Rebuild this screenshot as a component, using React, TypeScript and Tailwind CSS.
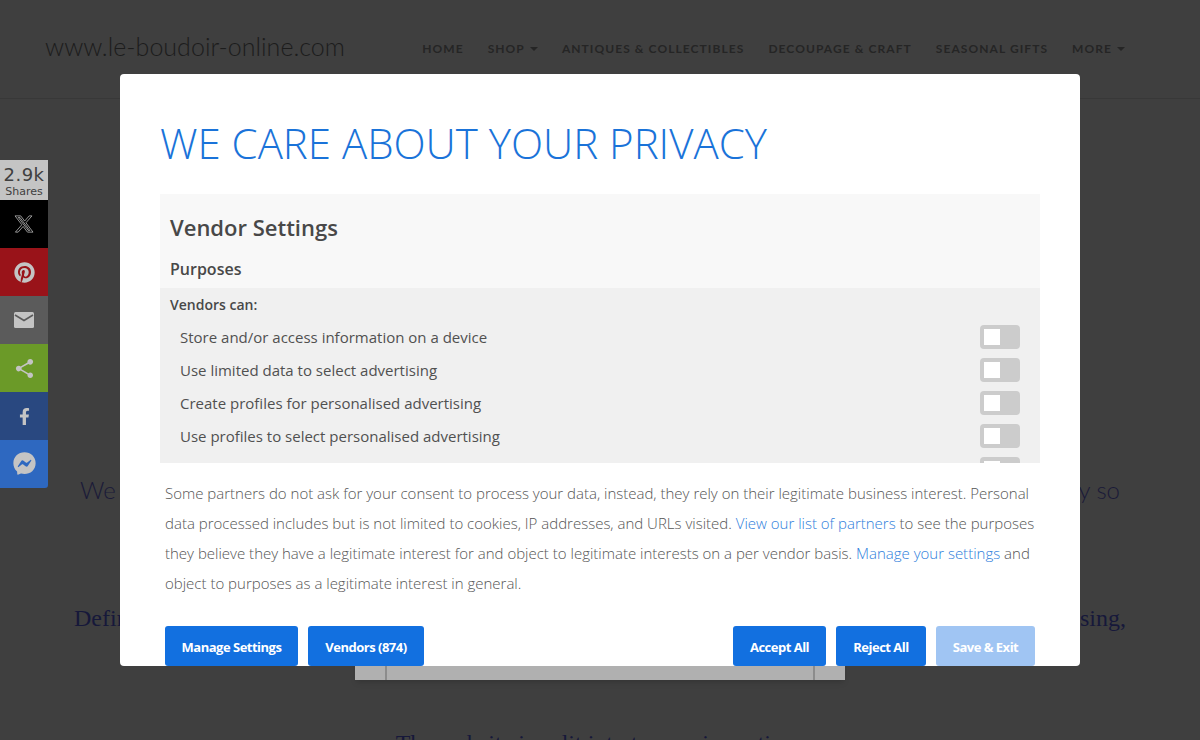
import { FaFacebookMessenger, FaFacebookF, FaPinterest } from 'react-icons/fa';
import { MdShare } from 'react-icons/md';

const NAV = ['HOME', 'SHOP', 'ANTIQUES & COLLECTIBLES', 'DECOUPAGE & CRAFT', 'SEASONAL GIFTS', 'MORE'];
const PURPOSES = [
  'Store and/or access information on a device',
  'Use limited data to select advertising',
  'Create profiles for personalised advertising',
  'Use profiles to select personalised advertising',
  '',
];

function Toggle() {
  return (
    <div className="ml-auto w-10 h-6 p-1 rounded-[4px] bg-[#cccccc] shrink-0">
      <div className="w-4 h-4 bg-white" />
    </div>
  );
}

function ShareButton({ className, children }: { className: string; children: React.ReactNode }) {
  return <div className={`h-12 flex items-center justify-center text-[#c4c4c4] ${className}`}>{children}</div>;
}

function Btn({ label, className }: { label: string; className: string }) {
  return (
    <button className={`h-10 pt-[3px] rounded-[3px] text-white text-[13px] font-bold tracking-[-0.5px] ${className}`}>
      {label}
    </button>
  );
}

export default function App() {
  return (
    <div className="relative h-[740px] overflow-hidden bg-[#3f3f3f]">
      {/* page behind the overlay */}
      <header className="h-[99px] flex items-center justify-between pl-[45px] pr-[75px] border-b border-[#383838]">
        <div className="font-['Lato'] font-light text-[25px] text-[#1c1c1c] tracking-[0.02px] -mt-1">
          www.le-boudoir-online.com
        </div>
        <nav className="flex gap-6 font-['Lato'] font-bold text-[12px] tracking-[1.07px] text-[#252525]">
          {NAV.map((n) => (
            <span key={n} className="flex items-center gap-[5px]">
              {n}
              {(n === 'SHOP' || n === 'MORE') && (
                <span className="w-0 h-0 border-x-4 border-x-transparent border-t-4 border-t-[#252525]" />
              )}
            </span>
          ))}
        </nav>
      </header>

      <main className="flex flex-col items-center">
        <div className="w-full px-20 mt-[375px] flex justify-between font-['Lato'] font-light text-[24px] leading-8 text-[#1a1a38]">
          <span>We</span>
          <span>y so</span>
        </div>
        <div className="w-full px-[74px] mt-[96px] flex justify-between font-['Liberation_Serif',serif] text-[24px] leading-8 text-[#16183a]">
          <span>Defin</span>
          <span>sing,</span>
        </div>
        <div className="w-[490px] h-[30px] mt-4 bg-[#b0b0b0] shadow-md flex justify-between px-[30px]">
          <div className="w-[2px] bg-[#8c8c8c]" />
          <div className="w-[2px] bg-[#8c8c8c]" />
        </div>
        <div className="mt-[47px] font-['Liberation_Serif',serif] text-[24px] leading-8 text-[#16183a]">
          The website is split into two main sections
        </div>
      </main>

      {/* share bar */}
      <aside className="absolute left-0 top-[160px] w-12">
        <div className="h-10 bg-[#c4c4c4] text-[#404040] flex flex-col items-center font-['DejaVu_Sans',sans-serif]">
          <span className="text-[18px] leading-[21px] mt-1 tracking-[0.5px]">2.9k</span>
          <span className="text-[11px] leading-[13px]">Shares</span>
        </div>
        <ShareButton className="bg-black">
          <svg viewBox="0 0 24 24" width="20" height="20" fill="none" stroke="currentColor" strokeWidth="0.9">
            <path d="M18.244 2.25h3.308l-7.227 8.26 8.502 11.24H16.17l-5.214-6.817L4.99 21.75H1.68l7.73-8.835L1.254 2.25H8.08l4.713 6.231zm-1.161 17.52h1.833L7.084 4.126H5.117z" />
          </svg>
        </ShareButton>
        <ShareButton className="bg-[#991319]"><FaPinterest size={21} /></ShareButton>
        <ShareButton className="bg-[#5b5b5b]">
          <svg viewBox="0 0 20 16" width="20" height="16">
            <rect width="20" height="16" rx="1.5" fill="currentColor" />
            <path d="M1 3l9 5.5L19 3" fill="none" stroke="#5b5b5b" strokeWidth="1.6" />
          </svg>
        </ShareButton>
        <ShareButton className="bg-[#6b9a28]"><MdShare size={23} /></ShareButton>
        <ShareButton className="bg-[#294880]"><FaFacebookF size={17} /></ShareButton>
        <ShareButton className="bg-[#2e68c0] rounded-br-[3px]"><FaFacebookMessenger size={23} className="-mt-0.5" /></ShareButton>
      </aside>

      {/* consent dialog */}
      <div className="absolute left-[120px] top-[74px] w-[960px] h-[592px] bg-white rounded-[4px] flex flex-col font-['Open_Sans',sans-serif]">
        <h1 className="mt-[43px] ml-10 text-[42px] leading-[52px] font-light text-[#1a73d9]">WE CARE ABOUT YOUR PRIVACY</h1>

        <div className="mt-[25px] mx-10 h-[269px] overflow-hidden">
          <div className="bg-[#f8f8f8] h-[94px] px-[10px] text-[#484848]">
            <h2 className="pt-4 text-[22px] leading-[34px] font-semibold">Vendor Settings</h2>
            <h3 className="mt-[13px] text-[16px] leading-[24px] font-semibold">Purposes</h3>
          </div>
          <div className="bg-[#f0f0f0] h-[175px] px-[10px] pt-[7px]">
            <div className="text-[14px] leading-5 font-semibold text-[#484848]">Vendors can:</div>
            <ul className="mt-[10px] px-[10px] flex flex-col gap-[9px] text-[15px] text-[#505050]">
              {PURPOSES.map((p, i) => (
                <li key={i} className="flex items-center h-6">
                  {p}
                  <Toggle />
                </li>
              ))}
            </ul>
          </div>
        </div>

        <p className="mt-[15px] ml-[45px] w-[880px] text-[15px] leading-[30px] font-light text-[#555]">
          Some partners do not ask for your consent to process your data, instead, they rely on their legitimate business interest. Personal
          data processed includes but is not limited to cookies, IP addresses, and URLs visited.{' '}
          <span className="text-[#2f80dc]">View our list of partners</span> to see the purposes they believe they have a legitimate interest for and object to legitimate interests on a per vendor basis.{' '}
          <span className="text-[#2f80dc]">Manage your settings</span> and object to purposes as a legitimate interest in general.
        </p>

        <div className="mt-auto mx-[45px] flex gap-[10px]">
          <Btn label="Manage Settings" className="w-[133px] bg-[#1270e0]" />
          <Btn label="Vendors (874)" className="w-[116px] bg-[#1270e0]" />
          <div className="ml-auto flex gap-[10px]">
            <Btn label="Accept All" className="w-[93px] bg-[#1270e0]" />
            <Btn label="Reject All" className="w-[90px] bg-[#1270e0]" />
            <Btn label="Save & Exit" className="w-[99px] bg-[#a0c5f3]" />
          </div>
        </div>
      </div>
    </div>
  );
}
